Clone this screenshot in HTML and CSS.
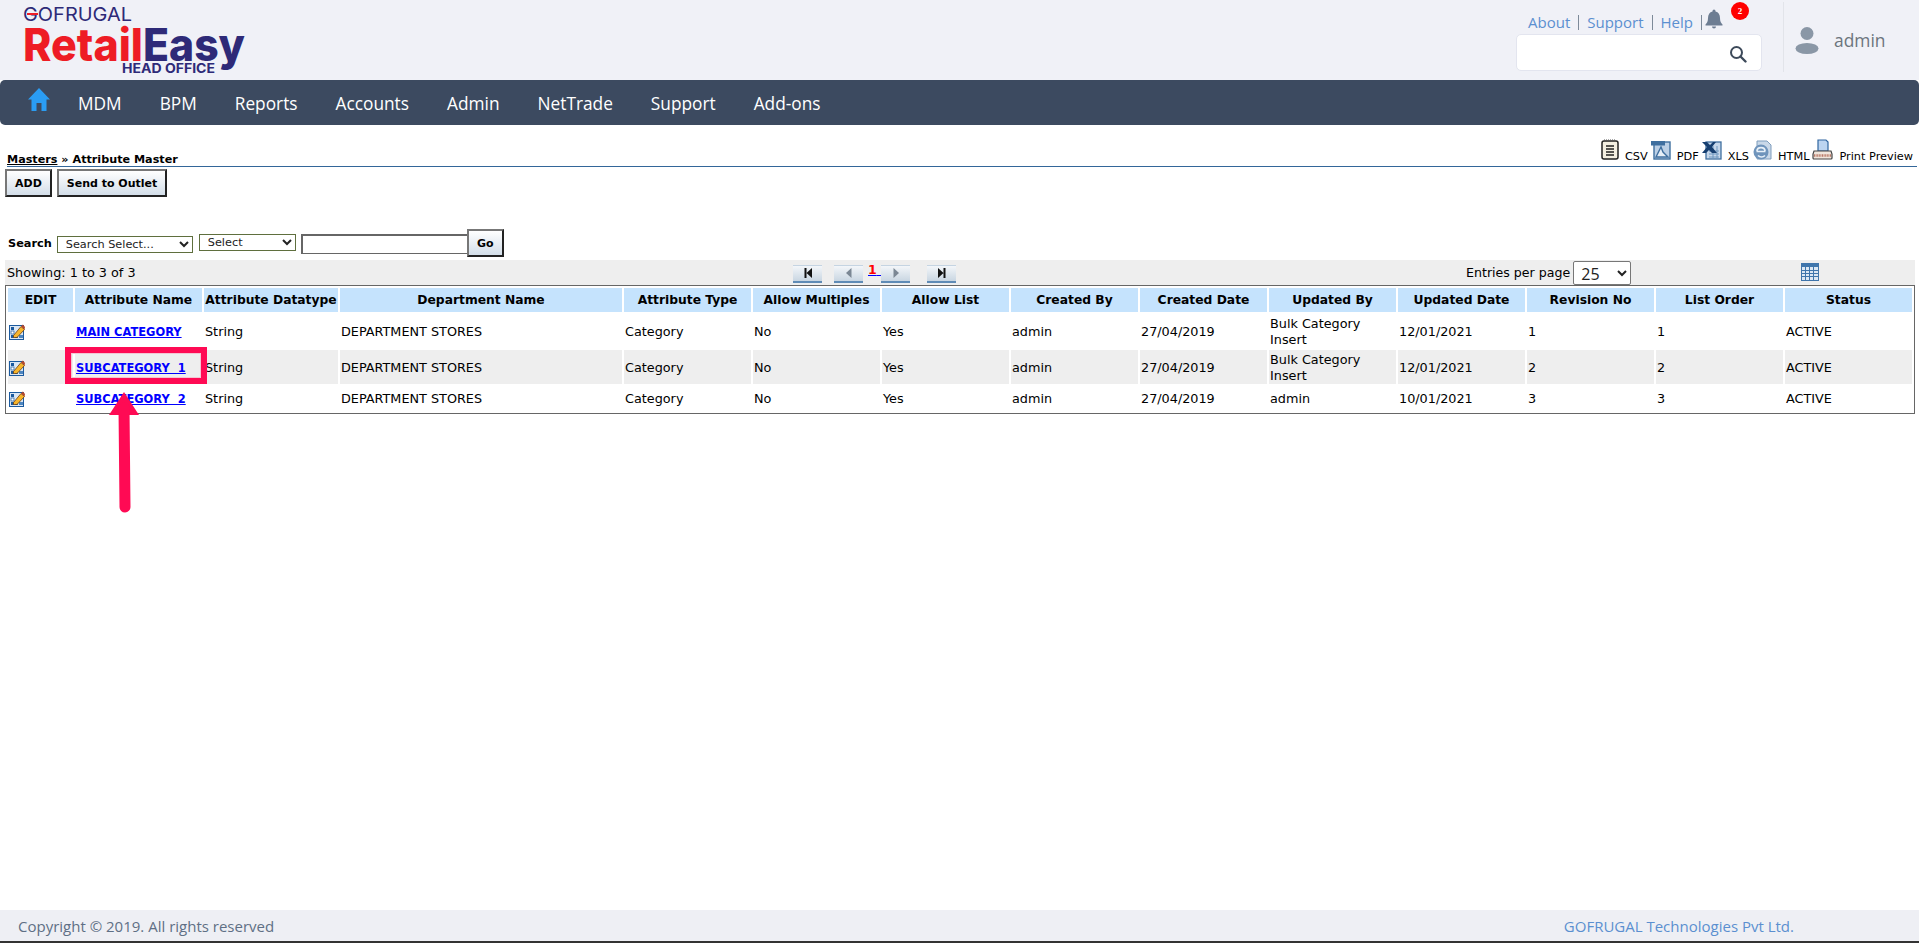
FILE: index.html
```html
<!DOCTYPE html>
<html lang="en">
<head>
<meta charset="utf-8">
<title>Attribute Master</title>
<link rel="stylesheet" href="styles.css">
</head>
<body>
<svg class="defs" width="0" height="0">
  <symbol id="i-edit" viewBox="0 0 16 16">
    <rect x="0.500" y="1.500" width="14" height="14" fill="#dbe7f4" stroke="#1c5a9e"/>
    <rect x="2" y="3" width="3" height="3" fill="#1c5a9e"/><rect x="2" y="7" width="3" height="3" fill="#fff" stroke="#1c5a9e" stroke-width=".7"/><rect x="2" y="11" width="3" height="3" fill="#1c5a9e"/>
    <rect x="6" y="11" width="3" height="3" fill="#1c5a9e"/><rect x="10" y="11" width="4" height="3" fill="#4d86c0"/>
    <path d="M4.500 11.500 L12 2.500 L15.500 5.500 L8 13.500 L4.500 13.500 Z" fill="#f7b52c" stroke="#6b3f10" stroke-width=".8"/>
    <path d="M12 2.500 L13.800 .6 L16 3 L15.500 5.500 Z" fill="#b5482e"/>
  </symbol>
</svg>

<header class="top">
  <svg class="logo" width="260" height="80" viewBox="0 0 260 80">
    <text class="l-go" x="23" y="21" textLength="109" lengthAdjust="spacingAndGlyphs">GOFRUGAL</text>
    <rect x="27" y="13" width="11" height="2" fill="#ee1c25"/>
    <text class="l-re" x="23" y="61" textLength="120" lengthAdjust="spacingAndGlyphs">Retail</text>
    <text class="l-ea" x="143" y="61" textLength="102" lengthAdjust="spacingAndGlyphs">Easy</text>
    <text class="l-ho" x="122" y="72.500" textLength="93" lengthAdjust="spacingAndGlyphs">HEAD OFFICE</text>
  </svg>
  <div class="top-right">
    <div class="tools">
      <div class="links">
        <a class="lnk">About</a><i class="sep"></i>
        <a class="lnk">Support</a><i class="sep"></i>
        <a class="lnk">Help</a><i class="sep sep-last"></i>
        <span class="bell">
          <svg width="18" height="20" viewBox="0 0 18 20"><path d="M9 0.500 a1.500 1.500 0 0 1 1.500 1.500 v.6 C13.500 3.300 15 6 15 9 c0 3.500 1 5 2.500 6.500 v1 H.5 v-1 C2 14 3 12.500 3 9 c0-3 1.500-5.700 4.500-6.400 V2 A1.500 1.500 0 0 1 9 .5 Z M7 17.500 h4 a2 2 0 0 1-4 0 Z" fill="#6d7d92"/></svg>
          <b class="badge">2</b>
        </span>
      </div>
      <div class="search">
        <svg width="18" height="18" viewBox="0 0 18 18"><circle cx="7.500" cy="7.500" r="5.500" fill="none" stroke="#3d4a5a" stroke-width="2"/><path d="M11.500 11.500 L16.500 16.500" stroke="#3d4a5a" stroke-width="2.400" stroke-linecap="round"/></svg>
      </div>
    </div>
    <div class="user">
      <svg width="24" height="28" viewBox="0 0 24 28"><circle cx="12" cy="7.500" r="6.500" fill="#8a97a6"/><ellipse cx="12" cy="22.500" rx="11.500" ry="5.500" fill="#8a97a6"/></svg>
      <span class="uname">admin</span>
    </div>
  </div>
</header>

<nav class="nav">
  <svg class="home" width="24" height="24" viewBox="0 0 22 24"><path d="M11 0 L22 11.500 H18.500 V23 H13.500 V15 H8.500 V23 H3.500 V11.500 H0 Z" fill="#2a9df4"/></svg>
  <a>MDM</a><a>BPM</a><a>Reports</a><a>Accounts</a><a>Admin</a><a>NetTrade</a><a>Support</a><a>Add-ons</a>
</nav>

<main class="main">
  <div class="crumbs">
    <div class="crumb"><a class="master">Masters</a> » Attribute Master</div>
    <div class="exports">
      <span class="exp">
        <svg width="18" height="21" viewBox="0 0 18 21"><rect x="1" y="2" width="16" height="18" rx="2" fill="#f3efe2" stroke="#222" stroke-width="1.500"/><path d="M3 1.500h12" stroke="#555" stroke-dasharray="1 1" stroke-width="2"/><path d="M5 7h8M5 10h8M5 13h8M5 16h8" stroke="#222" stroke-width="1.300"/></svg>
        <span class="exp-t">CSV</span>
      </span>
      <span class="exp">
        <svg width="20" height="20" viewBox="0 0 20 20"><rect x="3" y="2" width="16" height="17" fill="#bcd0e6" stroke="#3f6f9f" stroke-width="1.400"/><rect x="0" y="1" width="14" height="4.500" fill="#3f6f9f"/><path d="M5 17 L10 7 L12 12 L17 17 Z" fill="#e6eef6" stroke="#3f6f9f" stroke-width="1.400"/></svg>
        <span class="exp-t">PDF</span>
      </span>
      <span class="exp">
        <svg width="20" height="20" viewBox="0 0 20 20"><rect x="4" y="2" width="15" height="17" fill="#c6d7ea" stroke="#3f6f9f" stroke-width="1.300"/><path d="M7 11h10M7 14h10M7 17h10M11 6v12M15 6v12" stroke="#6f97bf"/><path d="M0 2h5l3 3 3-3h3l-4 5 5 6h-5l-3-3-3 3H0l5-6Z" fill="#173f70"/></svg>
        <span class="exp-t">XLS</span>
      </span>
      <span class="exp">
        <svg width="20" height="20" viewBox="0 0 20 20"><path d="M5 1h10l4 4v14H5Z" fill="#c9d8e8" stroke="#7f9dbd"/><circle cx="9" cy="12" r="7.500" fill="#6f94bb"/><path d="M4.500 11.500h9M6 15.500c2 2 5 2 7 0M5 11c0-4.500 8-4.500 8 0" fill="none" stroke="#e8f0f8" stroke-width="1.700"/></svg>
        <span class="exp-t">HTML</span>
      </span>
      <span class="exp">
        <svg width="21" height="21" viewBox="0 0 21 21"><path d="M6 1h8l2 2v9H6Z" fill="#bcd4f0" stroke="#2f65a0" stroke-width="1.200"/><path d="M2 12h17l1 3v4a1 1 0 0 1-1 1H2a1 1 0 0 1-1-1v-4Z" fill="#f0e6dc" stroke="#444" stroke-width="1.200"/><path d="M2 16.500h17" stroke="#b97a68" stroke-width="2.400" stroke-dasharray="1 .6"/></svg>
        <span class="exp-t">Print Preview</span>
      </span>
    </div>
  </div>

  <div class="actions">
    <button class="btn">ADD</button>
    <button class="btn">Send to Outlet</button>
  </div>

  <form class="filter">
    <label class="f-label">Search</label>
    <select class="sel sel-a"><option>Search Select...</option></select>
    <select class="sel sel-b"><option>Select</option></select>
    <input class="f-input" type="text">
    <button class="btn btn-go" type="button">Go</button>
  </form>

  <div class="pagebar">
    <div class="showing">Showing: 1 to 3 of 3</div>
    <div class="pager">
      <span class="pg pg-first"><svg width="10" height="10" viewBox="0 0 10 10"><path d="M1.500 0h2v10h-2ZM9 0v10L3.500 5Z" fill="#111"/></svg></span>
      <span class="pg pg-prev"><svg width="10" height="10" viewBox="0 0 10 10"><path d="M7.500 0v10L2 5Z" fill="#7b8794"/></svg></span>
      <a class="pnum"><span class="pnum-v">1</span>&nbsp;</a>
      <span class="pg pg-next"><svg width="10" height="10" viewBox="0 0 10 10"><path d="M2.500 0v10L8 5Z" fill="#7b8794"/></svg></span>
      <span class="pg pg-last"><svg width="10" height="10" viewBox="0 0 10 10"><path d="M6.500 0h2v10h-2ZM1 0v10L6.500 5Z" fill="#111"/></svg></span>
    </div>
    <div class="entries">
      <span>Entries per page</span>
      <select class="sel-n"><option>25</option></select>
    </div>
    <svg class="calc" width="18" height="18" viewBox="0 0 18 18"><rect x=".5" y=".5" width="17" height="17" fill="#dbe7f3" stroke="#3f75ab"/><rect x=".5" y=".5" width="17" height="3.500" fill="#3f75ab"/><path d="M4.500 4v13M8.500 4v13M12.500 4v13M1 7.500h16M1 10.500h16M1 13.500h16" stroke="#3f75ab"/></svg>
  </div>

  <table class="grid">
    <colgroup>
      <col class="c-edit"><col class="c-name"><col class="c-type"><col class="c-dept">
      <col class="c-std"><col class="c-std"><col class="c-std"><col class="c-std"><col class="c-std">
      <col class="c-std"><col class="c-std"><col class="c-std"><col class="c-std"><col class="c-std">
    </colgroup>
    <thead>
      <tr>
        <th>EDIT</th><th>Attribute Name</th><th>Attribute Datatype</th><th>Department Name</th>
        <th>Attribute Type</th><th>Allow Multiples</th><th>Allow List</th><th>Created By</th>
        <th>Created Date</th><th>Updated By</th><th>Updated Date</th><th>Revision No</th>
        <th>List Order</th><th>Status</th>
      </tr>
    </thead>
    <tbody>
      <tr class="r-tall">
        <td><svg class="ic" width="16" height="16"><use href="#i-edit"/></svg></td>
        <td><a class="nm">MAIN CATEGORY</a></td><td>String</td><td>DEPARTMENT STORES</td><td>Category</td><td>No</td><td>Yes</td><td>admin</td><td>27/04/2019</td><td>Bulk Category Insert</td><td>12/01/2021</td><td>1</td><td>1</td><td>ACTIVE</td>
      </tr>
      <tr class="r-tall r-alt">
        <td><svg class="ic" width="16" height="16"><use href="#i-edit"/></svg></td>
        <td><a class="nm">SUBCATEGORY&nbsp; 1</a></td><td>String</td><td>DEPARTMENT STORES</td><td>Category</td><td>No</td><td>Yes</td><td>admin</td><td>27/04/2019</td><td>Bulk Category Insert</td><td>12/01/2021</td><td>2</td><td>2</td><td>ACTIVE</td>
      </tr>
      <tr class="r-low">
        <td><svg class="ic" width="16" height="16"><use href="#i-edit"/></svg></td>
        <td><a class="nm">SUBCATEGORY&nbsp; 2</a></td><td>String</td><td>DEPARTMENT STORES</td><td>Category</td><td>No</td><td>Yes</td><td>admin</td><td>27/04/2019</td><td>admin</td><td>10/01/2021</td><td>3</td><td>3</td><td>ACTIVE</td>
      </tr>
    </tbody>
  </table>
</main>

<footer class="foot">
  <span class="copy">Copyright © 2019. All rights reserved</span>
  <a class="corp">GOFRUGAL Technologies Pvt Ltd.</a>
</footer>

<div class="mark-box"></div>
<svg class="mark-arrow" width="40" height="128" viewBox="0 0 40 128">
  <path d="M20 4 L35 27 H5 Z" fill="#ff0a54"/>
  <path d="M20 20 L21 119" stroke="#ff0a54" stroke-width="11" stroke-linecap="round"/>
</svg>
</body>
</html>
```

FILE: styles.css
```css
* { box-sizing: border-box; }
html, body { margin: 0; padding: 0; }
body {
  position: relative;
  width: 1919px;
  height: 943px;
  overflow: hidden;
  display: flex;
  flex-direction: column;
  background: #fff;
  font-family: "DejaVu Sans", Verdana, sans-serif;
  font-size: 12.8px;
  color: #000;
}
.defs { position: absolute; }

/* header */
.top {
  height: 80px;
  flex: none;
  display: flex;
  justify-content: space-between;
  background: #f0f1f7;
}
.logo { display: block; }
.logo text { font-family: Inter, "Liberation Sans", sans-serif; }
.l-go { font-size: 19px; font-weight: 400; fill: #2e2a78; }
.l-re { font-size: 45px; font-weight: 800; fill: #ee1c25; }
.l-ea { font-size: 45px; font-weight: 800; fill: #2e2a78; }
.l-ho { font-size: 13px; font-weight: 700; fill: #2e2a78; }
.top-right { display: flex; }
.tools { width: 246px; margin-right: 21px; display: flex; flex-direction: column; }
.links {
  height: 34px;
  padding: 10px 0 0 12px;
  display: flex;
  align-items: center;
  font-family: "Open Sans", sans-serif;
  font-size: 15px;
  color: #5b8fd0;
}
.sep { width: 1px; height: 15px; margin: 0 8px; background: #7d8a99; }
.sep-last { margin-right: 3px; }
.bell { position: relative; display: flex; margin-top: -6px; }
.badge {
  position: absolute;
  left: 26px;
  top: -7px;
  width: 18px;
  height: 18px;
  border-radius: 50%;
  background: #ff0000;
  color: #fff;
  font: bold 9px/18px "Liberation Serif", serif;
  text-align: center;
}
.search {
  height: 37px;
  background: #fff;
  border: 1px solid #e3e5ef;
  border-radius: 5px;
  display: flex;
  align-items: center;
  justify-content: flex-end;
  padding: 2px 14px 0 0;
}
.user {
  width: 136px;
  height: 70px;
  margin-top: 2px;
  border-left: 1px solid #e2e4ea;
  padding: 6px 0 0 11px;
  display: flex;
  align-items: center;
  gap: 15px;
}
.uname { font-family: "Open Sans", sans-serif; font-size: 17.4px; color: #6c757d; }

/* nav */
.nav {
  height: 45px;
  flex: none;
  display: flex;
  align-items: center;
  gap: 38px;
  padding: 1px 0 0 27px;
  background: #3c4a60;
  border-radius: 5px;
  color: #fff;
  font-family: "Open Sans", sans-serif;
  font-size: 17.3px;
}
.home { margin: -6px -11px 0 0; }

/* main */
.main { flex: 1; }
.crumbs {
  height: 42px;
  margin: 0 2px 0 7px;
  border-bottom: 1px solid #336699;
  display: flex;
  align-items: flex-end;
  justify-content: space-between;
}
.crumb { font-size: 11.2px; font-weight: bold; line-height: 13px; }
.master { text-decoration: underline; }
.exports { display: flex; gap: 3px; padding-bottom: 3px; padding-right: 4px; }
.exp { display: flex; align-items: flex-end; gap: 6px; }
.exp svg { margin-bottom: 3px; }
.exp-t { font-size: 11.3px; line-height: 13px; }

.actions { display: flex; gap: 5px; margin: 2px 0 0 5px; }
.btn {
  height: 28px;
  padding: 0 8px;
  border: 2px solid;
  border-color: #777 #222 #222 #777;
  background: linear-gradient(#fff, #d3dee9);
  font: bold 11px "DejaVu Sans", Verdana, sans-serif;
  color: #000;
}
.filter { display: flex; align-items: flex-start; height: 28px; margin: 32px 0 0 8px; }
.f-label { font-weight: bold; font-size: 11.3px; margin: 8px 5px 0 0; line-height: 13px; }
.sel {
  height: 17px;
  padding: 0 0 0 4px;
  border: 1px solid #5f6f3e;
  border-radius: 0;
  background: #fff;
  font: 11.3px "DejaVu Sans", Verdana, sans-serif;
  color: #222;
}
.sel-a { width: 136px; margin-top: 7px; }
.sel-b { width: 97px; margin: 5px 5px 0 6px; }
.f-input { width: 167px; height: 20px; margin-top: 5px; border: 1px solid #666; border-top-width: 2px; border-left-width: 2px; background: #fff; }
.btn-go { width: 37px; padding: 0; margin-left: -1px; }

.pagebar {
  height: 25px;
  margin: 3px 4px 0 5px;
  background: #eee;
  display: flex;
  align-items: center;
}
.showing { width: 788px; padding-left: 2px; }
.pager { width: 673px; display: flex; align-items: center; height: 100%; }
.pg {
  width: 29px;
  height: 18px;
  margin-top: 2px;
  display: flex;
  align-items: center;
  justify-content: center;
  background: linear-gradient(#f3f6f9, #c9d6e2);
  border-bottom: 2px solid #5f8bb5;
  border-top: 1px solid #c5d4e2;
}
.pg-prev { margin-left: 12px; }
.pnum { width: 18px; margin-top: -5px; padding-left: 5px; color: #00f; font-weight: bold; font-size: 12.5px; line-height: 14px; text-decoration: underline; white-space: nowrap; overflow: hidden; }
.pnum-v { color: #f00; }
.pg-last { margin-left: 17px; }
.entries { width: 335px; display: flex; align-items: center; gap: 3px; font-size: 12.6px; }
.sel-n {
  width: 58px;
  height: 24px;
  padding: 0 0 2px 3px;
  border: 1px solid #777;
  border-radius: 2px;
  background: #fff;
  font: 16px "Open Sans", sans-serif;
  color: #222;
}
.calc { margin-top: -2px; }

.grid {
  width: 1910px;
  margin-left: 5px;
  table-layout: fixed;
  border-collapse: separate;
  border-spacing: 2px;
  border: 1px solid #666;
}
.c-edit { width: 65px; }
.c-name { width: 127px; }
.c-type { width: 134px; }
.c-dept { width: 282px; }
.c-std { width: 127px; }
.grid th {
  height: 24px;
  padding: 0;
  background: #c5e3fd;
  font-size: 12.3px;
  font-weight: bold;
  text-align: center;
  white-space: nowrap;
}
.grid td { padding: 1px 1px 0; line-height: 16px; }
.r-tall td { height: 34px; }
.r-low td { height: 25px; }
.r-alt td { background: #eee; }
.ic { display: block; }
.nm { color: #0000ff; font-weight: bold; font-size: 11.45px; text-decoration: underline; white-space: nowrap; }

/* footer */
.foot {
  height: 33px;
  flex: none;
  display: flex;
  align-items: center;
  justify-content: space-between;
  padding: 1px 125px 0 18px;
  background: #eeeff4;
  border-bottom: 2px solid #333;
  font-family: "Open Sans", sans-serif;
  font-size: 15px;
}
.copy { color: #5f6f85; }
.corp { color: #5b8fd0; }

/* annotation overlay */
.mark-box {
  position: absolute;
  left: 65px;
  top: 347px;
  width: 142px;
  height: 37px;
  border: 6px solid #ff0a54;
  box-shadow: inset 0 0 0 1px #f3c5d3;
}
.mark-arrow { position: absolute; left: 104px; top: 388px; }
```
